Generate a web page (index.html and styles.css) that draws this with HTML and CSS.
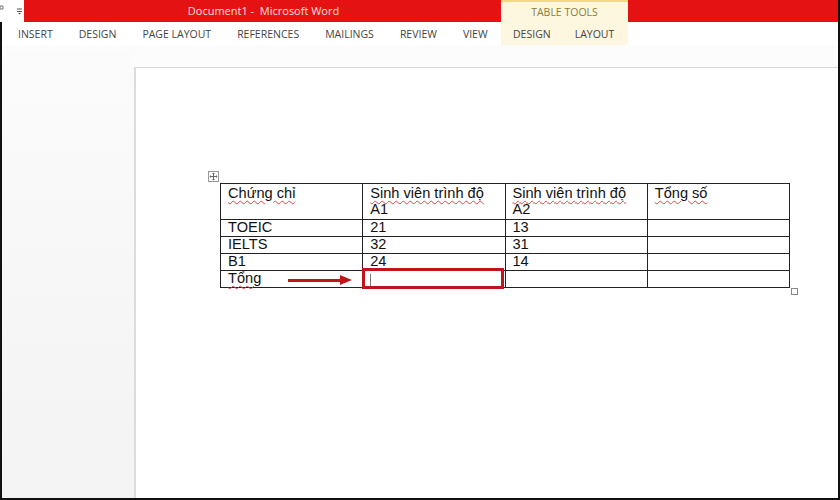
FILE: index.html
```html
<!DOCTYPE html>
<html lang="vi">
<head>
<meta charset="utf-8">
<title>Document1 - Microsoft Word</title>
<link rel="stylesheet" href="styles.css">
</head>
<body>
<div class="window">
  <div class="top">
    <div class="qa">
      <svg class="qa-icon" width="8" height="10" viewBox="0 0 8 10"><path d="M0 3h3v3H0z" fill="none" stroke="#777" stroke-width="1"/></svg>
      <svg class="qa-menu" width="7" height="8" viewBox="0 0 7 8"><path d="M1 2h5M1 4.5h5" stroke="#555" stroke-width="1"/><path d="M2 6h3l-1.5 1.5z" fill="#555"/></svg>
    </div>
    <div class="title">Document1 -&nbsp; Microsoft Word</div>
    <div class="tools">
      <div class="tools-title">TABLE TOOLS</div>
      <div class="tabs tools-tabs"><span>DESIGN</span><span>LAYOUT</span></div>
    </div>
    <div class="title-rest"></div>
    <div class="tabs main-tabs">
      <span>INSERT</span><span>DESIGN</span><span>PAGE LAYOUT</span><span>REFERENCES</span><span>MAILINGS</span><span>REVIEW</span><span>VIEW</span>
    </div>
  </div>
  <div class="workspace">
    <div class="gutter"></div>
    <div class="page-col">
      <div class="page">
        <div class="table-wrap">
          <span class="move-handle">
            <svg width="11" height="11" viewBox="0 0 11 11"><rect x="0.5" y="0.5" width="10" height="10" fill="#fff" stroke="#999"/><path d="M5.5 2v7M2 5.5h7" stroke="#666" stroke-width="1"/><path d="M5.5 1.5l-1.5 1.5h3zM5.5 9.5l-1.5-1.5h3zM1.5 5.5l1.5-1.5v3zM9.5 5.5l-1.5-1.5v3z" fill="#666"/></svg>
          </span>
          <table class="doc-table">
            <tr class="head">
              <td><span class="sp">Chứng chỉ</span></td>
              <td><span class="sp">Sinh viên trình độ</span><br>A1</td>
              <td><span class="sp">Sinh viên trình độ</span><br>A2</td>
              <td><span class="sp">Tổng số</span></td>
            </tr>
            <tr><td>TOEIC</td><td>21</td><td>13</td><td></td></tr>
            <tr><td>IELTS</td><td>32</td><td>31</td><td></td></tr>
            <tr><td>B1</td><td>24</td><td>14</td><td></td></tr>
            <tr><td><span class="sp">Tổng</span></td><td class="cur-cell"><span class="caret"></span></td><td></td><td></td></tr>
          </table>
          <span class="resize-handle"></span>
          <div class="hl-box"></div>
          <div class="arrow"><span class="shaft"></span><span class="head-tip"></span></div>
        </div>
      </div>
    </div>
  </div>
</div>
</body>
</html>
```
FILE: styles.css
```css
* { box-sizing: border-box; }
html, body { margin: 0; padding: 0; }
body {
  width: 840px;
  height: 500px;
  overflow: hidden;
  background: #fff;
  font-family: "Open Sans", "Noto Sans", sans-serif;
}
.window {
  width: 840px;
  height: 500px;
  display: flex;
  flex-direction: column;
  border-right: 2px solid #111;
  border-bottom: 2px solid #111;
}
.top {
  display: grid;
  grid-template-columns: 24px 477px 127px 1fr;
  grid-template-rows: 22px 23px;
  background: #fff;
}
.qa {
  grid-column: 1;
  grid-row: 1;
  display: flex;
  align-items: center;
  gap: 8px;
  background: #fff;
}
.qa-icon { margin-top: -6px; }
.title {
  grid-column: 2;
  grid-row: 1;
  background: #e41212;
  color: #fbe0de;
  font-size: 11px;
  line-height: 22px;
  text-align: center;
  padding-left: 2px;
}
.title-rest {
  grid-column: 4;
  grid-row: 1;
  background: #e41212;
}
.tools {
  grid-column: 3;
  grid-row: 1 / 3;
  background: #fdf7e0;
  border-top: 2px solid #f2d983;
  display: flex;
  flex-direction: column;
}
.tools-title {
  height: 20px;
  line-height: 20px;
  text-align: center;
  font-size: 10.5px;
  color: #8c7b3c;
}
.tabs {
  display: flex;
  align-items: center;
  font-size: 10.5px;
  color: #444;
  height: 23px;
}
.main-tabs {
  grid-column: 1 / 3;
  grid-row: 2;
  border-left: 2px solid #111;
  padding-left: 16px;
  gap: 26px;
}
.tools-tabs {
  padding-left: 12px;
  gap: 24px;
}
.workspace {
  flex: 1;
  display: flex;
  border-left: 2px solid #111;
  background: #fcfcfc;
}
.gutter {
  width: 132px;
  background: linear-gradient(#fbfbfb, #f3f3f3);
  margin-top: 7px;
}
.page-col {
  flex: 1;
  padding-top: 22px;
  display: flex;
}
.page {
  flex: 1;
  background: #fff;
  border-top: 1px solid #d9d9d9;
  border-left: 2px solid #dcdcdc;
  padding: 115px 0 0 84px;
}
.table-wrap {
  position: relative;
  width: 570px;
}
.doc-table {
  border-collapse: collapse;
  font-family: "Liberation Sans", Arial, sans-serif;
  font-size: 14.6px;
  line-height: 15px;
  color: #111;
  table-layout: fixed;
  width: 570px;
}
.doc-table td {
  border: 1px solid #222;
  width: 142px;
  padding: 0 7px;
  vertical-align: top;
  height: 17px;
}
.doc-table tr.head td { height: 36px; padding-top: 1px; line-height: 16px; }
.sp {
  text-decoration: underline wavy #e04848;
  text-decoration-thickness: 1px;
  text-underline-offset: 2px;
}
.cur-cell { position: relative; }
.caret {
  position: absolute;
  left: 7px;
  top: 3px;
  width: 1px;
  height: 12px;
  background: #777;
}
.move-handle {
  position: absolute;
  left: -12px;
  top: -12px;
  width: 11px;
  height: 11px;
  line-height: 0;
}
.resize-handle {
  position: absolute;
  right: -8px;
  bottom: -7px;
  width: 7px;
  height: 7px;
  border: 1px solid #888;
  background: #fff;
}
.hl-box {
  position: absolute;
  left: 142px;
  top: 85px;
  width: 142px;
  height: 21px;
  border: 3px solid #c0151b;
}
.arrow {
  position: absolute;
  left: 68px;
  top: 92px;
  width: 64px;
  height: 10px;
  display: flex;
  align-items: center;
}
.shaft {
  width: 52px;
  height: 3px;
  background: #c0151b;
}
.head-tip {
  width: 0;
  height: 0;
  border-top: 5px solid transparent;
  border-bottom: 5px solid transparent;
  border-left: 12px solid #c0151b;
}
```
